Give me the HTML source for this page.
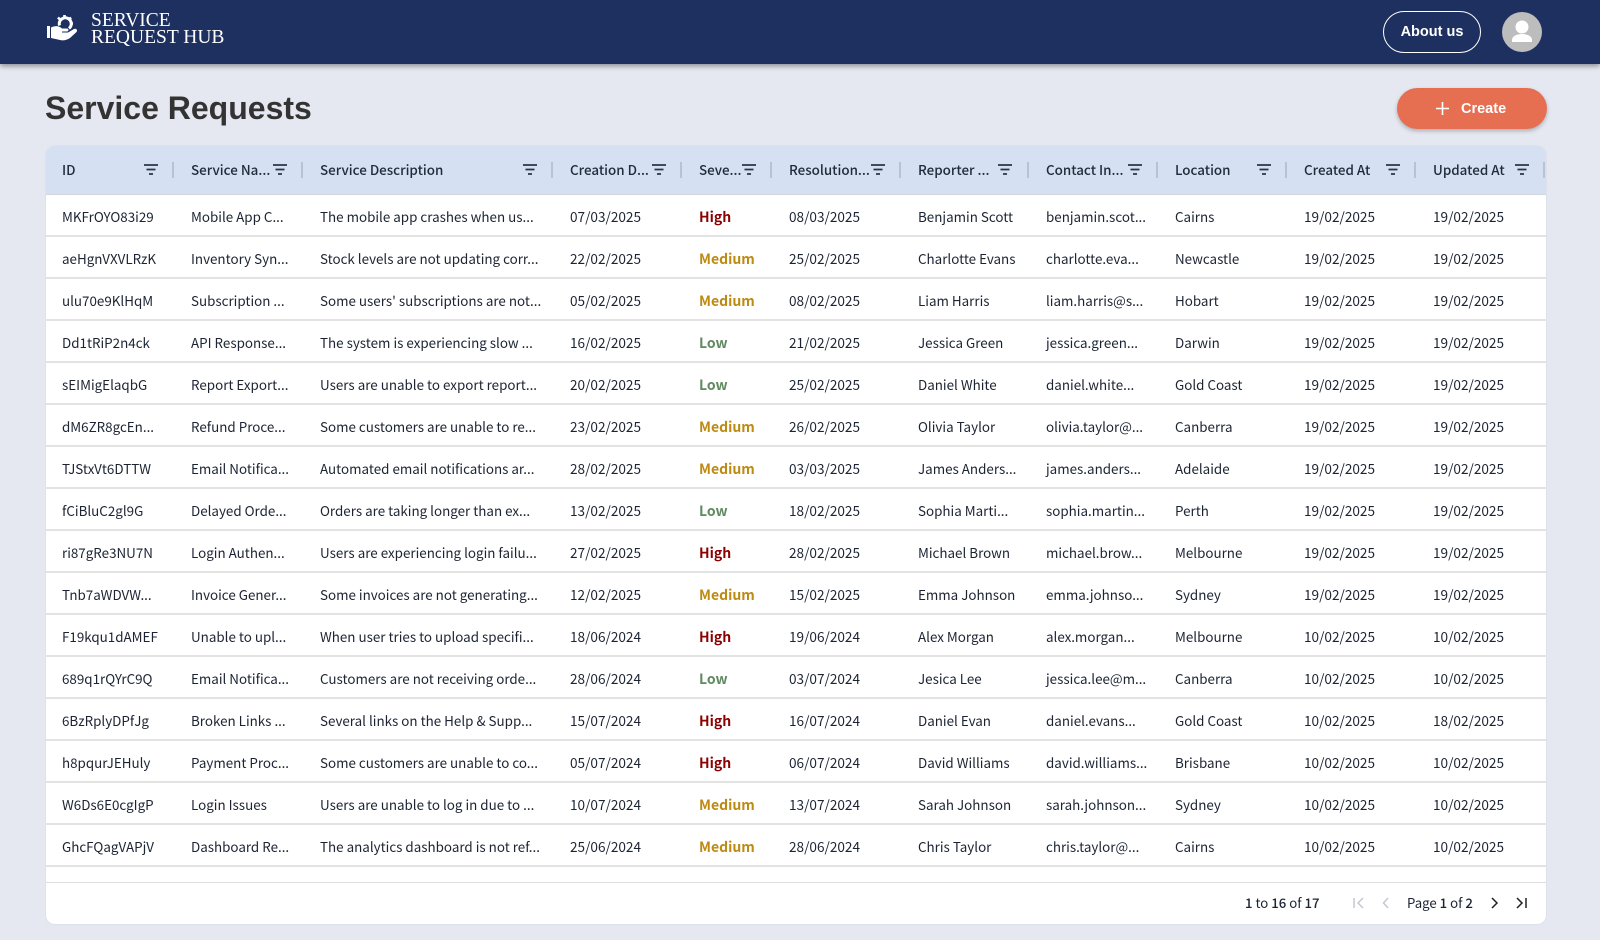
<!DOCTYPE html>
<html lang="en"><head><meta charset="utf-8"><title>Service Requests</title>
<style>
*{box-sizing:border-box}
html,body{margin:0;width:1600px;height:940px;overflow:hidden;background:#e5e8f1;font-family:"Noto Sans CJK JP","Liberation Sans",sans-serif;color:#1c2433}
.top{position:absolute;left:0;top:0;width:1600px;height:64px;background:#1d305f;box-shadow:0 2px 5px rgba(0,0,0,.4)}
.logo{position:absolute;left:91px;top:12px;font:19.5px/17px "Liberation Serif",serif;color:#fff}
.about{position:absolute;left:1383px;top:11px;width:98px;height:42px;border:1px solid #fff;border-radius:21px;color:#fff;font:bold 14.5px/40px "Liberation Sans",sans-serif;text-align:center}
.ava{position:absolute;left:1502px;top:12px;width:40px;height:40px;border-radius:50%;background:#bdbdbd}
h1{position:absolute;left:45px;top:90px;margin:0;font:bold 32px/37px "Liberation Sans",sans-serif;color:#333}
.create{position:absolute;left:1397px;top:88px;width:150px;height:41px;border-radius:21px;background:#e76f51;box-shadow:0 2px 4px rgba(0,0,0,.25);color:#fff;font:bold 14.5px/42px "Liberation Sans",sans-serif}
.create span{position:absolute;left:64px;top:0}
.card{position:absolute;left:45px;top:145px;width:1502px;height:780px;background:#fff;border:1px solid #dde1ea;border-radius:10px;overflow:hidden}
.hd{position:absolute;left:0;top:0;width:1500px;height:49px;background:#d5e0f3;border-bottom:1px solid #d3d6dd}
.hd b{position:absolute;top:0;font-weight:500;font-size:13.4px;line-height:47px;white-space:nowrap;color:#222b3a}
.hd svg{position:absolute;top:17px}
.hd i{position:absolute;top:16px;width:2px;height:16px;background:#b9c2d2}
.r{position:absolute;left:0;width:1500px;height:42px;border-bottom:2px solid #e3e3e3;font-size:13.4px;line-height:43px;white-space:nowrap}
.r span{position:absolute;top:0}
.c1{left:16px}.c2{left:145px}.c3{left:274px}.c4{left:524px;font-size:13.6px}.c5{left:653px;font-weight:700;font-size:14px;line-height:45px}.c6{left:743px;font-size:13.6px}.c7{left:872px}.c8{left:1000px}.c9{left:1129px}.c10{left:1258px;font-size:13.6px}.c11{left:1387px;font-size:13.6px}
.h{color:#8b0000}.m{color:#bd8a12}.l{color:#5f8a5f}
.ft{position:absolute;left:0;top:736px;width:1500px;height:42px;border-top:1px solid #dedede;font-size:13.2px;line-height:40px}
.ft span{position:absolute;top:0;white-space:nowrap}
.ft svg{position:absolute;top:13px}
</style></head><body>
<div class="top">
<svg style="position:absolute;left:46px;top:14px" width="33" height="28" viewBox="0 0 33 28"><path d="M13.500 11.500a6 6 0 1 1 9.500 3" fill="none" stroke="#fff" stroke-width="3"/><path d="M18.500 1v3M25 3.500l-2 2M27 9.500h-3M12 3.500l2 2" stroke="#fff" stroke-width="2.600"/><path d="M1 12h3v12H1z" fill="#fff"/><path d="M5 13.500c4-2 8-2 11 1h5c2 0 2 3 0 3h-5v1h6l6-3.500c2-1 4 1 2.500 3l-6.500 6c-3 2-7 3-10 2l-9-2z" fill="#fff"/></svg>
<div class="logo">SERVICE<br>REQUEST HUB</div>
<div class="about">About us</div>
<div class="ava"><svg width="40" height="40" viewBox="0 0 40 40"><circle cx="20" cy="15" r="6.5" fill="#fff"/><path d="M10 30v-2c0-4 5-6 10-6s10 2 10 6v2z" fill="#fff"/></svg></div>
</div>
<h1>Service Requests</h1>
<div class="create"><svg style="position:absolute;left:39px;top:14px" width="13" height="13" viewBox="0 0 13 13"><path d="M6.500 0v13M0 6.500h13" stroke="#fff" stroke-width="1.600"/></svg><span>Create</span></div>
<div class="card">
<div class="hd">
<b style="left:16px">ID</b><svg style="left:98px" width="14" height="14" viewBox="0 0 14 14"><path d="M0 2h14M2.500 6.500h9M5 11h4" stroke="#2b3442" stroke-width="1.700"/></svg><i style="left:126px"></i>
<b style="left:145px">Service Na...</b><svg style="left:227px" width="14" height="14" viewBox="0 0 14 14"><path d="M0 2h14M2.500 6.500h9M5 11h4" stroke="#2b3442" stroke-width="1.700"/></svg><i style="left:255px"></i>
<b style="left:274px">Service Description</b><svg style="left:477px" width="14" height="14" viewBox="0 0 14 14"><path d="M0 2h14M2.500 6.500h9M5 11h4" stroke="#2b3442" stroke-width="1.700"/></svg><i style="left:505px"></i>
<b style="left:524px">Creation D...</b><svg style="left:606px" width="14" height="14" viewBox="0 0 14 14"><path d="M0 2h14M2.500 6.500h9M5 11h4" stroke="#2b3442" stroke-width="1.700"/></svg><i style="left:634px"></i>
<b style="left:653px">Seve...</b><svg style="left:696px" width="14" height="14" viewBox="0 0 14 14"><path d="M0 2h14M2.500 6.500h9M5 11h4" stroke="#2b3442" stroke-width="1.700"/></svg><i style="left:724px"></i>
<b style="left:743px">Resolution...</b><svg style="left:825px" width="14" height="14" viewBox="0 0 14 14"><path d="M0 2h14M2.500 6.500h9M5 11h4" stroke="#2b3442" stroke-width="1.700"/></svg><i style="left:853px"></i>
<b style="left:872px">Reporter ...</b><svg style="left:952px" width="14" height="14" viewBox="0 0 14 14"><path d="M0 2h14M2.500 6.500h9M5 11h4" stroke="#2b3442" stroke-width="1.700"/></svg><i style="left:981px"></i>
<b style="left:1000px">Contact In...</b><svg style="left:1082px" width="14" height="14" viewBox="0 0 14 14"><path d="M0 2h14M2.500 6.500h9M5 11h4" stroke="#2b3442" stroke-width="1.700"/></svg><i style="left:1110px"></i>
<b style="left:1129px">Location</b><svg style="left:1211px" width="14" height="14" viewBox="0 0 14 14"><path d="M0 2h14M2.500 6.500h9M5 11h4" stroke="#2b3442" stroke-width="1.700"/></svg><i style="left:1239px"></i>
<b style="left:1258px">Created At</b><svg style="left:1340px" width="14" height="14" viewBox="0 0 14 14"><path d="M0 2h14M2.500 6.500h9M5 11h4" stroke="#2b3442" stroke-width="1.700"/></svg><i style="left:1368px"></i>
<b style="left:1387px">Updated At</b><svg style="left:1469px" width="14" height="14" viewBox="0 0 14 14"><path d="M0 2h14M2.500 6.500h9M5 11h4" stroke="#2b3442" stroke-width="1.700"/></svg><i style="left:1497px"></i>
</div>
<div class="r" style="top:49px"><span class="c1">MKFrOYO83i29</span><span class="c2">Mobile App C...</span><span class="c3">The mobile app crashes when us...</span><span class="c4">07/03/2025</span><span class="c5 h">High</span><span class="c6">08/03/2025</span><span class="c7">Benjamin Scott</span><span class="c8">benjamin.scot...</span><span class="c9">Cairns</span><span class="c10">19/02/2025</span><span class="c11">19/02/2025</span></div>
<div class="r" style="top:91px"><span class="c1">aeHgnVXVLRzK</span><span class="c2">Inventory Syn...</span><span class="c3">Stock levels are not updating corr...</span><span class="c4">22/02/2025</span><span class="c5 m">Medium</span><span class="c6">25/02/2025</span><span class="c7">Charlotte Evans</span><span class="c8">charlotte.eva...</span><span class="c9">Newcastle</span><span class="c10">19/02/2025</span><span class="c11">19/02/2025</span></div>
<div class="r" style="top:133px"><span class="c1">ulu70e9KlHqM</span><span class="c2">Subscription ...</span><span class="c3">Some users' subscriptions are not...</span><span class="c4">05/02/2025</span><span class="c5 m">Medium</span><span class="c6">08/02/2025</span><span class="c7">Liam Harris</span><span class="c8">liam.harris@s...</span><span class="c9">Hobart</span><span class="c10">19/02/2025</span><span class="c11">19/02/2025</span></div>
<div class="r" style="top:175px"><span class="c1">Dd1tRiP2n4ck</span><span class="c2">API Response...</span><span class="c3">The system is experiencing slow ...</span><span class="c4">16/02/2025</span><span class="c5 l">Low</span><span class="c6">21/02/2025</span><span class="c7">Jessica Green</span><span class="c8">jessica.green...</span><span class="c9">Darwin</span><span class="c10">19/02/2025</span><span class="c11">19/02/2025</span></div>
<div class="r" style="top:217px"><span class="c1">sEIMigElaqbG</span><span class="c2">Report Export...</span><span class="c3">Users are unable to export report...</span><span class="c4">20/02/2025</span><span class="c5 l">Low</span><span class="c6">25/02/2025</span><span class="c7">Daniel White</span><span class="c8">daniel.white...</span><span class="c9">Gold Coast</span><span class="c10">19/02/2025</span><span class="c11">19/02/2025</span></div>
<div class="r" style="top:259px"><span class="c1">dM6ZR8gcEn...</span><span class="c2">Refund Proce...</span><span class="c3">Some customers are unable to re...</span><span class="c4">23/02/2025</span><span class="c5 m">Medium</span><span class="c6">26/02/2025</span><span class="c7">Olivia Taylor</span><span class="c8">olivia.taylor@...</span><span class="c9">Canberra</span><span class="c10">19/02/2025</span><span class="c11">19/02/2025</span></div>
<div class="r" style="top:301px"><span class="c1">TJStxVt6DTTW</span><span class="c2">Email Notifica...</span><span class="c3">Automated email notifications ar...</span><span class="c4">28/02/2025</span><span class="c5 m">Medium</span><span class="c6">03/03/2025</span><span class="c7">James Anders...</span><span class="c8">james.anders...</span><span class="c9">Adelaide</span><span class="c10">19/02/2025</span><span class="c11">19/02/2025</span></div>
<div class="r" style="top:343px"><span class="c1">fCiBluC2gl9G</span><span class="c2">Delayed Orde...</span><span class="c3">Orders are taking longer than ex...</span><span class="c4">13/02/2025</span><span class="c5 l">Low</span><span class="c6">18/02/2025</span><span class="c7">Sophia Marti...</span><span class="c8">sophia.martin...</span><span class="c9">Perth</span><span class="c10">19/02/2025</span><span class="c11">19/02/2025</span></div>
<div class="r" style="top:385px"><span class="c1">ri87gRe3NU7N</span><span class="c2">Login Authen...</span><span class="c3">Users are experiencing login failu...</span><span class="c4">27/02/2025</span><span class="c5 h">High</span><span class="c6">28/02/2025</span><span class="c7">Michael Brown</span><span class="c8">michael.brow...</span><span class="c9">Melbourne</span><span class="c10">19/02/2025</span><span class="c11">19/02/2025</span></div>
<div class="r" style="top:427px"><span class="c1">Tnb7aWDVW...</span><span class="c2">Invoice Gener...</span><span class="c3">Some invoices are not generating...</span><span class="c4">12/02/2025</span><span class="c5 m">Medium</span><span class="c6">15/02/2025</span><span class="c7">Emma Johnson</span><span class="c8">emma.johnso...</span><span class="c9">Sydney</span><span class="c10">19/02/2025</span><span class="c11">19/02/2025</span></div>
<div class="r" style="top:469px"><span class="c1">F19kqu1dAMEF</span><span class="c2">Unable to upl...</span><span class="c3">When user tries to upload specifi...</span><span class="c4">18/06/2024</span><span class="c5 h">High</span><span class="c6">19/06/2024</span><span class="c7">Alex Morgan</span><span class="c8">alex.morgan...</span><span class="c9">Melbourne</span><span class="c10">10/02/2025</span><span class="c11">10/02/2025</span></div>
<div class="r" style="top:511px"><span class="c1">689q1rQYrC9Q</span><span class="c2">Email Notifica...</span><span class="c3">Customers are not receiving orde...</span><span class="c4">28/06/2024</span><span class="c5 l">Low</span><span class="c6">03/07/2024</span><span class="c7">Jesica Lee</span><span class="c8">jessica.lee@m...</span><span class="c9">Canberra</span><span class="c10">10/02/2025</span><span class="c11">10/02/2025</span></div>
<div class="r" style="top:553px"><span class="c1">6BzRplyDPfJg</span><span class="c2">Broken Links ...</span><span class="c3">Several links on the Help &amp; Supp...</span><span class="c4">15/07/2024</span><span class="c5 h">High</span><span class="c6">16/07/2024</span><span class="c7">Daniel Evan</span><span class="c8">daniel.evans...</span><span class="c9">Gold Coast</span><span class="c10">10/02/2025</span><span class="c11">18/02/2025</span></div>
<div class="r" style="top:595px"><span class="c1">h8pqurJEHuly</span><span class="c2">Payment Proc...</span><span class="c3">Some customers are unable to co...</span><span class="c4">05/07/2024</span><span class="c5 h">High</span><span class="c6">06/07/2024</span><span class="c7">David Williams</span><span class="c8">david.williams...</span><span class="c9">Brisbane</span><span class="c10">10/02/2025</span><span class="c11">10/02/2025</span></div>
<div class="r" style="top:637px"><span class="c1">W6Ds6E0cgIgP</span><span class="c2">Login Issues</span><span class="c3">Users are unable to log in due to ...</span><span class="c4">10/07/2024</span><span class="c5 m">Medium</span><span class="c6">13/07/2024</span><span class="c7">Sarah Johnson</span><span class="c8">sarah.johnson...</span><span class="c9">Sydney</span><span class="c10">10/02/2025</span><span class="c11">10/02/2025</span></div>
<div class="r" style="top:679px"><span class="c1">GhcFQagVAPjV</span><span class="c2">Dashboard Re...</span><span class="c3">The analytics dashboard is not ref...</span><span class="c4">25/06/2024</span><span class="c5 m">Medium</span><span class="c6">28/06/2024</span><span class="c7">Chris Taylor</span><span class="c8">chris.taylor@...</span><span class="c9">Cairns</span><span class="c10">10/02/2025</span><span class="c11">10/02/2025</span></div>
<div class="ft">
<span style="left:1199px"><b style="font-weight:500">1</b> to <b style="font-weight:500">16</b> of <b style="font-weight:500">17</b></span>
<svg style="left:1306px" width="14" height="14" viewBox="0 0 14 14" fill="none" stroke="#c4c8cf" stroke-width="1.500"><path d="M2 2v10M11 2 6 7l5 5"/></svg>
<svg style="left:1333px" width="14" height="14" viewBox="0 0 14 14" fill="none" stroke="#c4c8cf" stroke-width="1.500"><path d="M9 2 4.500 7 9 12"/></svg>
<span style="left:1361px">Page <b style="font-weight:500">1</b> of <b style="font-weight:500">2</b></span>
<svg style="left:1441px" width="14" height="14" viewBox="0 0 14 14" fill="none" stroke="#222" stroke-width="1.500"><path d="M5 2l5 5-5 5"/></svg>
<svg style="left:1468px" width="14" height="14" viewBox="0 0 14 14" fill="none" stroke="#222" stroke-width="1.500"><path d="M3 2l5 5-5 5M12 2v10"/></svg>
</div>
</div>
</body></html>
